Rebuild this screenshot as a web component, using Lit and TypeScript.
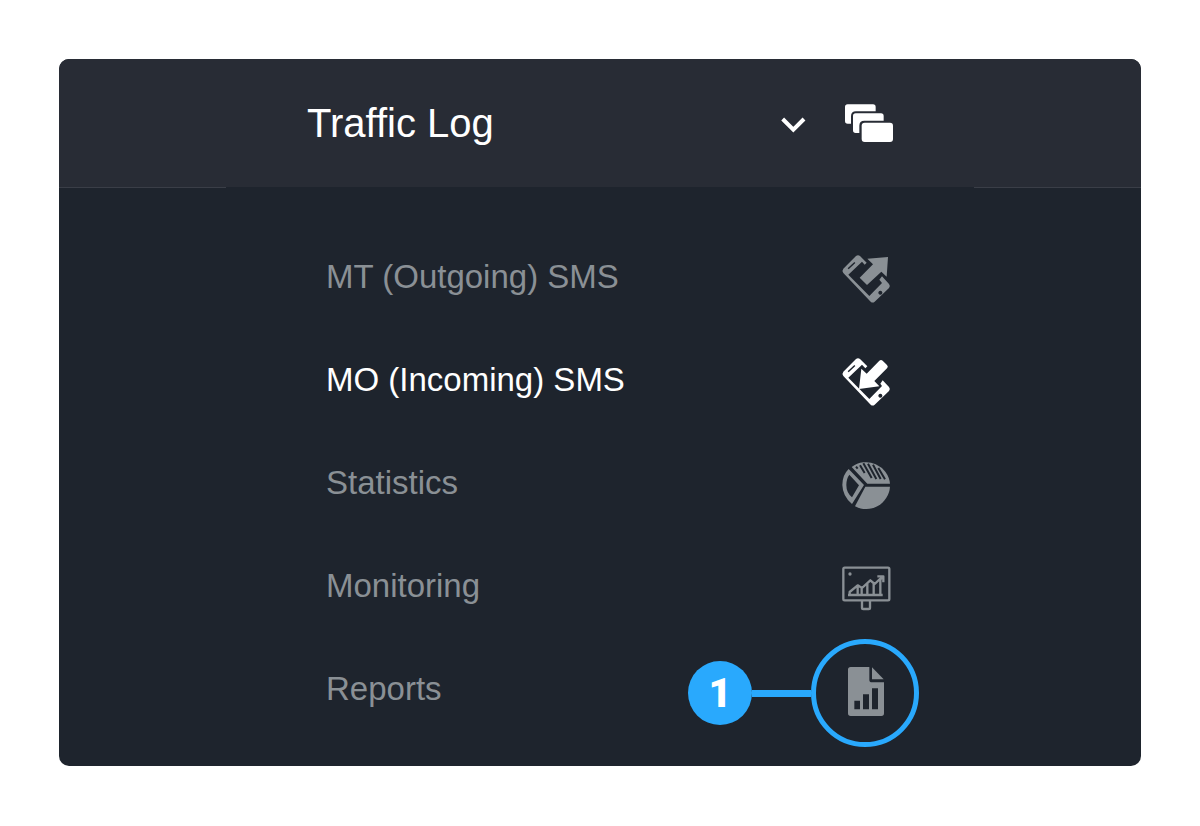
import { LitElement, html, css, svg, type SVGTemplateResult } from "lit";
import { customElement, property, state } from "lit/decorators.js";
import { classMap } from "lit/directives/class-map.js";

interface Entry {
  label: string;
  viewBox: string;
  icon: SVGTemplateResult;
  callout?: string;
}

const entries: Entry[] = [
  {
    label: "MT (Outgoing) SMS",
    viewBox: "33 21 153 153",
    icon: svg`
      <path fill="currentColor" fill-rule="evenodd" d="M40 71 78 33Q84 28 90 33L110 53 104 59 96 50 55 89 118 153 156 114 148 104 156 94 177 117Q182 123 177 129L134 170Q128 175 122 170L40 84Q35 77 40 71ZM53 70 56 73 76 54 73 51ZM151 137a6 6 0 1 0 .1 0Z"/>
      <path fill="currentColor" d="M112 41 174 36 170 95 154 80 111 120 89 98 129 58Z"/>`,
  },
  {
    label: "MO (Incoming) SMS",
    viewBox: "33 15 153 153",
    icon: svg`
      <path fill="currentColor" fill-rule="evenodd" d="M40 65 78 27Q84 22 90 27L112 49 106 55 96 44 55 83 118 147 156 108 151 101 158 91 177 111Q182 117 177 123L134 164Q128 169 122 164L40 78Q35 71 40 65ZM53 64 56 67 76 48 73 45ZM151 131a6 6 0 1 0 .1 0Z"/>
      <path fill="currentColor" d="M94 56 110 71 148 32Q153 28 158 32L171 45Q176 50 171 55L133 93 148 109 87 117Z"/>`,
  },
  {
    label: "Statistics",
    viewBox: "33 24 153 153",
    icon: svg`
      <path fill="currentColor" fill-rule="evenodd" d="M56 57Q37 75 37 105 38 139 66 162L102 105ZM58 74 87 106 66 142Q49 128 49 105 49 86 58 74Z"/>
      <path fill="currentColor" d="M106 110 180 110A72 72 0 0 1 75 169Z"/>
      <path fill="currentColor" d="M65 51A72 72 0 0 1 180 101H112Z"/>
      <path class="hatch" d="m78 50 5 6M90 46l14 23M100 40l25 44M114 41l25 46M129 44l23 43M145 54l20 34"/>`,
  },
  {
    label: "Monitoring",
    viewBox: "33 18 153 153",
    icon: svg`
      <g fill="none" stroke="currentColor" stroke-width="7" stroke-linejoin="round">
        <rect x="40" y="38" width="138" height="98" rx="4"/>
        <path d="M96 138v20q0 4 4 4h16q4 0 4-4v-20"/>
        <path d="M54 120h104M59 118v-7l24-20 13 8 25-23 13 11 21-20M83 92v28M95 99v20M112 85v35M131 86v34M151 74v46"/>
        <path d="M142 64h18v18M158 66l-10 10"/>
      </g>
      <circle cx="60" cy="57" r="5" fill="currentColor"/>`,
  },
  {
    label: "Reports",
    viewBox: "483 102 153 153",
    callout: "1",
    icon: svg`
      <path fill="currentColor" fill-rule="evenodd" d="M512 111H568V149Q568 157 576 157H612V250Q612 258 604 258H512Q504 258 504 250V119Q504 111 512 111ZM523 212V238H540V212ZM549 193V238H567V193ZM576 175V238H594V175Z"/>
      <path fill="currentColor" d="M576 112 611 148H576Z"/>`,
  },
];

@customElement("menu-entry")
export class MenuEntry extends LitElement {
  @property({ attribute: false }) entry!: Entry;
  @property({ type: Boolean }) active = false;

  static styles = css`
    :host {
      display: block;
    }
    .link {
      display: flex;
      align-items: center;
      justify-content: space-between;
      gap: 24px;
      min-height: 103px;
      color: #8a9095;
      text-decoration: none;
      font-size: 33px;
      line-height: 40px;
    }
    .label {
      padding-bottom: 1px;
    }
    .link.active,
    .link:hover {
      color: #fff;
    }
    .slot {
      position: relative;
      display: flex;
      flex: none;
    }
    .icon {
      display: block;
      width: 51px;
      height: 51px;
      overflow: visible;
    }
    .hatch {
      fill: none;
      stroke: #1e242d;
      stroke-width: 6px;
    }
    .callout {
      position: absolute;
      top: -25px;
      right: -27px;
      display: flex;
      align-items: center;
      color: #29a9fd;
    }
    .badge {
      display: grid;
      place-items: center;
      width: 64px;
      height: 64px;
      border-radius: 50%;
      background: currentColor;
    }
    .number {
      padding-top: 2px;
      color: #fff;
      font: 900 40px/40px Roboto, sans-serif;
    }
    .line {
      width: 59px;
      height: 7px;
      background: currentColor;
    }
    .ring {
      box-sizing: border-box;
      width: 108px;
      height: 108px;
      border: 5px solid currentColor;
      border-radius: 50%;
    }
  `;

  render() {
    const { label, viewBox, icon, callout } = this.entry;
    return html`
      <a
        class=${classMap({ link: true, active: this.active })}
        href="#"
        aria-current=${this.active ? "page" : "false"}
      >
        <span class="label">${label}</span>
        <span class="slot">
          <svg class="icon" viewBox=${viewBox} aria-hidden="true">${icon}</svg>
          ${callout
            ? html`<span class="callout">
                <span class="badge"><span class="number">${callout}</span></span>
                <span class="line"></span>
                <span class="ring"></span>
              </span>`
            : ""}
        </span>
      </a>
    `;
  }
}

@customElement("app-root")
export class AppRoot extends LitElement {
  @state() private open = true;
  @state() private current = 1;

  static styles = css`
    :host {
      display: block;
      padding: 59px;
      background: #fff;
      font-family: "Liberation Sans", Arial, sans-serif;
    }
    .card {
      overflow: hidden;
      border-radius: 10px;
      background: #1e242d;
    }
    .header {
      background: #282c35;
      border-bottom: 1px solid #3a3e47;
    }
    .toggle {
      box-sizing: border-box;
      display: flex;
      align-items: center;
      gap: 40px;
      width: 100%;
      max-width: 748px;
      min-height: 128px;
      margin: 0 auto;
      padding: 0 81px;
      border: 0;
      background: none;
      color: #fff;
      font: 40px/48px "Liberation Sans", Arial, sans-serif;
      text-align: left;
      cursor: pointer;
    }
    .title {
      flex: 1;
    }
    .chevron {
      width: 24px;
      height: 24px;
      overflow: visible;
    }
    .stack {
      width: 48px;
      height: 48px;
      overflow: visible;
    }
    .menu {
      position: relative;
      box-sizing: border-box;
      max-width: 748px;
      margin: -1px auto 0;
      padding: 39px 82px 25px 100px;
      background: #1e242d;
      list-style: none;
    }
  `;

  render() {
    return html`
      <nav class="card" aria-label="Traffic Log">
        <div class="header">
          <button
            class="toggle"
            aria-expanded=${this.open ? "true" : "false"}
            @click=${() => (this.open = !this.open)}
          >
            <span class="title">Traffic Log</span>
            <svg class="chevron" viewBox="33 63 72 72" aria-hidden="true">
              <path d="M38 87 70 119 102 87" fill="none" stroke="currentColor" stroke-width="12" />
            </svg>
            <svg class="stack" viewBox="225 27 144 144" aria-hidden="true">
              <g fill="currentColor">
                <path d="M233 43H309Q317 43 317 51V64H258Q243 64 243 79V101H233Q225 101 225 93V51Q225 43 233 43Z" />
                <path d="M257 70H333Q341 70 341 78V92H283Q268 92 268 107V129H257Q249 129 249 121V78Q249 70 257 70Z" />
                <rect x="275" y="98" width="94" height="58" rx="9" />
              </g>
            </svg>
          </button>
        </div>
        ${this.open
          ? html`<ul class="menu">
              ${entries.map(
                (entry, i) => html`<li>
                  <menu-entry
                    .entry=${entry}
                    ?active=${i === this.current}
                    @click=${(e: Event) => {
                      e.preventDefault();
                      this.current = i;
                    }}
                  ></menu-entry>
                </li>`,
              )}
            </ul>`
          : ""}
      </nav>
    `;
  }
}
